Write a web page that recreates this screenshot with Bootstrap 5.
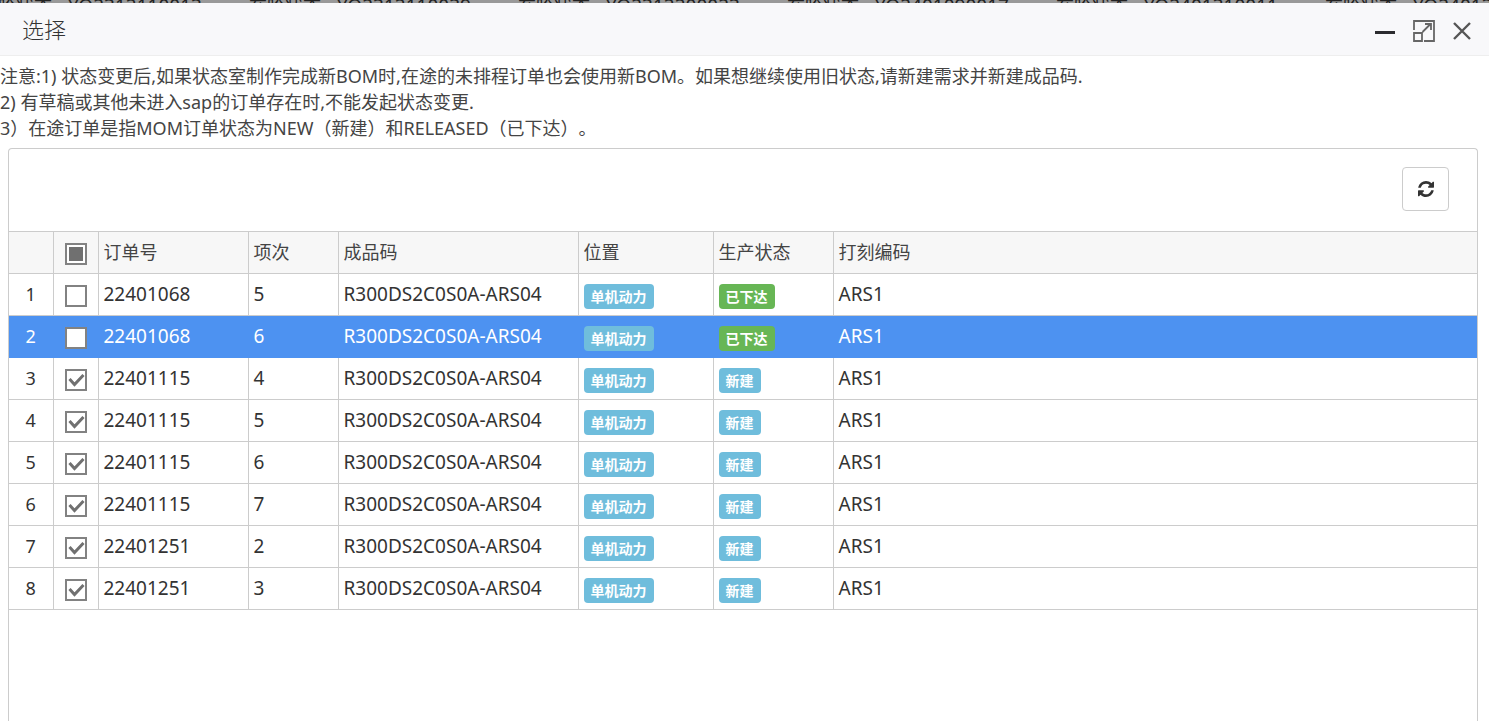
<!DOCTYPE html>
<html lang="zh-CN">
<head>
<meta charset="utf-8">
<meta name="viewport" content="width=device-width, initial-scale=1">
<title>选择</title>
<link rel="stylesheet" href="https://cdn.jsdelivr.net/npm/bootstrap@5.3.0/dist/css/bootstrap.min.css">
<style>
  body { font-family: "Noto Sans", "Noto Sans CJK SC", sans-serif; font-size: 18px; line-height: 26px; color: #333; text-spacing-trim: space-all; }
  .dialog-page { height: 100vh; }
  .page-behind { height: 3px; background: #999; color: #222; }
  .page-behind div { flex: 0 0 269px; line-height: 20px; margin-top: -4px; }
  .page-behind div:first-child { margin-left: -20px; }
  .latin { font-size: 19px; }
  .dialog-bar { background: #f8f8fa; border-bottom: 1px solid #eee; height: 53px; padding: 0 16px 0 22px; }
  .dialog-title { font-size: 22px; font-weight: 300; line-height: 30px; }
  .tool { border: 0; background: none; padding: 0; width: 22px; height: 24px; line-height: 0; }
  .notes { padding-top: 7px; color: #444; }
  .grid-panel { margin: 7px 11px 0 8px; border: 1px solid #ccc; border-bottom: 0; border-radius: 4px 4px 0 0; }
  .grid-toolbar { padding: 18px 28px 20px 0; }
  .reload { width: 47px; height: 44px; border: 1px solid #ccc; border-radius: 4px; background: #fff; padding: 0; line-height: 0; }
  .orders { table-layout: fixed; width: 100%; border-collapse: collapse; }
  .orders th, .orders td { height: 42px; padding: 0 5px 1px; border-top: 1px solid #ccc; border-left: 1px solid #ccc; font-weight: 400; white-space: nowrap; vertical-align: middle; }
  .orders th { background: #f7f7f7; color: #444; }
  .orders td { font-size: 19px; }
  .orders tr > :first-child { border-left: 0; text-align: center; padding: 0 0 1px; font-size: 18px; }
  .orders tr > :nth-child(2) { padding: 0; }
  .orders tbody tr:last-child td { border-bottom: 1px solid #ccc; }
  .orders .chosen td { background: #4d92f1; border-left-color: #4d92f1; color: #fff; }
  .orders .chosen + tr td { border-top-color: #4d92f1; }
  .tick { appearance: none; display: block; width: 22px; height: 22px; margin: 3px auto 0; border: 2px solid #828282; background: #fff center / 18px no-repeat; }
  .tick:checked { background-image: url("data:image/svg+xml,%3Csvg xmlns='http://www.w3.org/2000/svg' viewBox='0 0 18 18'%3E%3Cpath d='M2.500 8l5 5.500L16.500 4' fill='none' stroke='%23707070' stroke-width='3'/%3E%3C/svg%3E"); }
  .tick:indeterminate { background-image: linear-gradient(#707070, #707070); background-size: 14px 14px; }
  .tag { display: block; width: fit-content; margin-top: 4px; padding: 0 7px; border-radius: 4px; font-size: 14px; line-height: 25px; font-weight: 700; color: #fff; background: #6fbddc; }
  .tag-done { background: #67b655; }
</style>
</head>
<body>
<div class="dialog-page d-flex flex-column overflow-hidden">
<div class="page-behind d-flex flex-shrink-0 overflow-hidden" id="behind"></div>
<header class="dialog-bar d-flex flex-shrink-0 align-items-center justify-content-between">
  <h1 class="dialog-title m-0">选择</h1>
  <div class="d-flex gap-3 pt-1">
    <button type="button" class="tool" aria-label="最小化"><svg width="22" height="24" viewBox="0 0 22 24"><path d="M0 13.500h20" stroke="#2b2b2f" stroke-width="3"/></svg></button>
    <button type="button" class="tool" aria-label="最大化"><svg width="22" height="24" viewBox="0 0 22 24" fill="none" stroke="#666" stroke-width="1.800"><path d="M1 11V2h20v20H11M1 14h8v8H1zM9.500 13l7.500-7.500M12 5h6v6"/></svg></button>
    <button type="button" class="tool" aria-label="关闭"><svg width="22" height="24" viewBox="0 0 22 24"><path d="M3 4l16 16M19 4L3 20" stroke="#555" stroke-width="2.400"/></svg></button>
  </div>
</header>
<main class="flex-grow-1 d-flex flex-column">
  <div class="notes">
    <div>注意:1) 状态变更后,如果状态室制作完成新BOM时,在途的未排程订单也会使用新BOM。如果想继续使用旧状态,请新建需求并新建成品码.</div>
    <div>2) 有草稿或其他未进入sap的订单存在时,不能发起状态变更.</div>
    <div>3）在途订单是指MOM订单状态为NEW（新建）和RELEASED（已下达）。</div>
  </div>
  <section class="grid-panel flex-grow-1">
    <div class="grid-toolbar d-flex justify-content-end">
      <button type="button" class="reload" aria-label="刷新"><svg width="16" height="16" viewBox="0 0 1536 1536" fill="#333"><path d="M1511 928q0 5-1 7-64 268-268 434.500T764 1536q-146 0-282.500-55T238 1324l-129 129q-19 19-45 19t-45-19-19-45V960q0-26 19-45t45-19h448q26 0 45 19t19 45-19 45l-137 137q71 66 161 102t187 36q134 0 250-65t186-179q11-17 53-117 8-23 30-23h192q13 0 22.500 9.500t9.500 22.500zm25-800v448q0 26-19 45t-45 19h-448q-26 0-45-19t-19-45 19-45l138-138Q969 256 768 256q-134 0-250 65T332 500q-11 17-53 117-8 23-30 23H50q-13 0-22.500-9.500T18 608v-7q65-268 270-434.500T768 0q146 0 284 55.500T1297 212l130-129q19-19 45-19t45 19 19 45z"/></svg></button>
    </div>
    <table class="orders">
      <colgroup><col style="width:44px"><col style="width:45px"><col style="width:150px"><col style="width:90px"><col style="width:240px"><col style="width:135px"><col style="width:120px"><col></colgroup>
      <thead><tr><th></th><th><input type="checkbox" class="tick" id="all" aria-label="全选"></th><th>订单号</th><th>项次</th><th>成品码</th><th>位置</th><th>生产状态</th><th>打刻编码</th></tr></thead>
      <tbody id="rows"></tbody>
    </table>
  </section>
</main>
</div>
<script src="https://cdn.jsdelivr.net/npm/bootstrap@5.3.0/dist/js/bootstrap.bundle.min.js"></script>
<script>
  const orders = [['22401068',5,0],['22401068',6,0],['22401115',4,1],['22401115',5,1],['22401115',6,1],['22401115',7,1],['22401251',2,1],['22401251',3,1]];
  document.getElementById('rows').innerHTML = orders.map(([no, item, fresh], i) => `
    <tr${i === 1 ? ' class="chosen"' : ''}><td>${i + 1}</td>
    <td><input type="checkbox" class="tick" aria-label="选择第${i + 1}行"${fresh ? ' checked' : ''}></td>
    <td>${no}</td><td>${item}</td><td>R300DS2C0S0A-ARS04</td>
    <td><span class="tag">单机动力</span></td>
    <td><span class="tag${fresh ? '' : ' tag-done'}">${fresh ? '新建' : '已下达'}</span></td><td>ARS1</td></tr>`).join('');
  document.getElementById('all').indeterminate = true;
  document.getElementById('behind').innerHTML = ['YQ2312110013','YQ2312110039','YQ2312200023','YQ2401090017','YQ2401310011','YQ2401310012'].map(n => `<div class="d-flex gap-3"><span>在哈状态</span><span class="latin">${n}</span></div>`).join('');
</script>
</body>
</html>
